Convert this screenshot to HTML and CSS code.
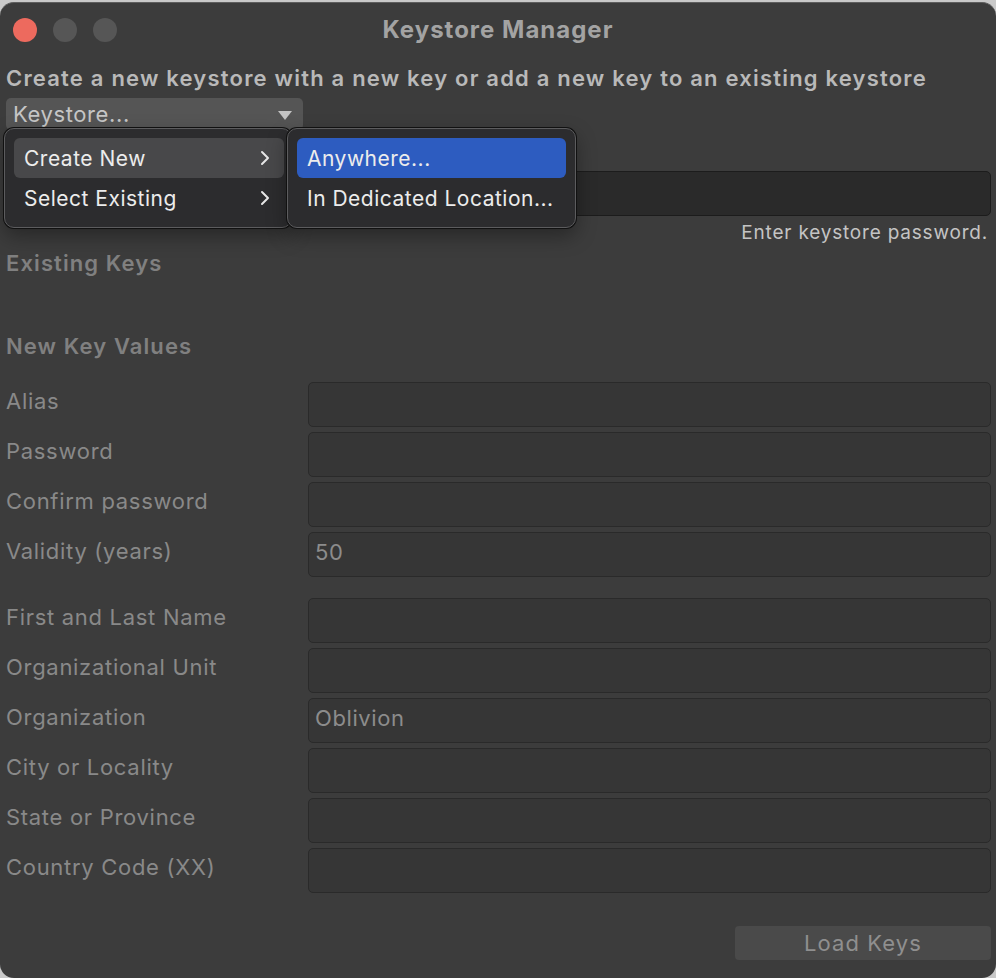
FILE: index.html
```html
<!DOCTYPE html>
<html>
<head>
<meta charset="utf-8">
<link rel="stylesheet" href="styles.css">
</head>
<body>
<div class="window">
  <div class="titlebar">
    <div class="lights">
      <span class="light red"></span>
      <span class="light"></span>
      <span class="light"></span>
    </div>
    <div class="title">Keystore Manager</div>
    <div></div>
  </div>
  <div class="content">
    <div class="subtitle">Create a new keystore with a new key or add a new key to an existing keystore</div>
    <div class="dropdown">
      <span>Keystore...</span>
      <svg class="caret" width="14" height="9" viewBox="0 0 14 9"><path d="M0 0 H14 L7 9 Z" fill="#c4c4c4"/></svg>
    </div>
    <div class="row pw-row">
      <div class="label"></div>
      <div class="field dark"></div>
    </div>
    <div class="hint">Enter keystore password.</div>
    <div class="section first">Existing Keys</div>
    <div class="section second">New Key Values</div>
    <div class="group">
      <div class="row"><div class="label">Alias</div><div class="field"></div></div>
      <div class="row"><div class="label">Password</div><div class="field"></div></div>
      <div class="row"><div class="label">Confirm password</div><div class="field"></div></div>
      <div class="row"><div class="label">Validity (years)</div><div class="field">50</div></div>
    </div>
    <div class="group second-group">
      <div class="row"><div class="label">First and Last Name</div><div class="field"></div></div>
      <div class="row"><div class="label">Organizational Unit</div><div class="field"></div></div>
      <div class="row"><div class="label">Organization</div><div class="field">Oblivion</div></div>
      <div class="row"><div class="label">City or Locality</div><div class="field"></div></div>
      <div class="row"><div class="label">State or Province</div><div class="field"></div></div>
      <div class="row"><div class="label">Country Code (XX)</div><div class="field"></div></div>
    </div>
    <div class="footer">
      <div class="button">Load Keys</div>
    </div>
  </div>

  <div class="menu main-menu">
    <div class="item active"><span>Create New</span><svg width="10" height="16" viewBox="0 0 10 16"><path d="M2 2 L8 8 L2 14" fill="none" stroke="#e6e6e6" stroke-width="2" stroke-linecap="round" stroke-linejoin="round"/></svg></div>
    <div class="item"><span>Select Existing</span><svg width="10" height="16" viewBox="0 0 10 16"><path d="M2 2 L8 8 L2 14" fill="none" stroke="#e6e6e6" stroke-width="2" stroke-linecap="round" stroke-linejoin="round"/></svg></div>
  </div>
  <div class="menu sub-menu">
    <div class="item selected"><span>Anywhere...</span></div>
    <div class="item"><span>In Dedicated Location...</span></div>
  </div>
</div>
</body>
</html>
```
FILE: styles.css
```css
* { box-sizing: border-box; }
html, body { margin: 0; padding: 0; }
body {
  background: #c9c9c9;
  font-family: Inter, "Noto Sans", "Liberation Sans", sans-serif;
  width: 996px;
  height: 978px;
  overflow: hidden;
}
.window {
  position: relative;
  margin-top: 2px;
  height: 976px;
  width: 996px;
  background: #3c3c3c;
  border-radius: 14px;
  border-top: 1px solid #5e5e5e;
  overflow: hidden;
}
.titlebar {
  height: 53px;
  display: grid;
  grid-template-columns: 1fr auto 1fr;
  align-items: center;
}
.lights {
  display: flex;
  gap: 16px;
  padding-left: 13px;
}
.light {
  width: 24px;
  height: 24px;
  border-radius: 50%;
  background: #565656;
}
.light.red { background: #ed6a5e; }
.title {
  font-weight: 700;
  font-size: 24px;
  color: #a3a3a3;
  letter-spacing: 1px;
}
.content {
  padding: 0 5px 0 6px;
}
.subtitle {
  font-weight: 600;
  font-size: 22px;
  color: #b9b9b9;
  line-height: 30px;
  margin-top: 7px;
  letter-spacing: 1.2px;
  white-space: nowrap;
}
.dropdown {
  margin-top: 5px;
  width: 297px;
  height: 32px;
  background: #555555;
  border-radius: 5px;
  display: flex;
  align-items: center;
  justify-content: space-between;
  padding: 0 11px 0 7px;
  color: #c6c6c6;
  font-size: 22px;
  letter-spacing: 0.6px;
}
.caret { margin-top: 2px; }
.row {
  display: flex;
  align-items: center;
  height: 45px;
  margin-bottom: 5px;
}
.label {
  width: 302px;
  flex: none;
  font-size: 22px;
  color: #898989;
  letter-spacing: 0.7px;
  padding-bottom: 7px;
}
.field {
  flex: 1;
  height: 45px;
  background: #363636;
  border: 1px solid #2a2a2a;
  border-radius: 5px;
  font-size: 22px;
  color: #8c8c8c;
  display: flex;
  align-items: center;
  padding-left: 6px;
  padding-bottom: 6px;
  letter-spacing: 0.6px;
}
.field.dark {
  background: #2a2a2a;
  border-color: #1c1c1c;
}
.pw-row {
  margin-top: 41px;
  margin-bottom: 0;
  height: 45px;
}
.hint {
  text-align: right;
  font-size: 19px;
  color: #c4c4c4;
  line-height: 26px;
  padding-right: 3px;
  margin-top: 4px;
  letter-spacing: 0.8px;
}
.section {
  font-weight: 600;
  font-size: 22px;
  color: #808080;
  line-height: 30px;
  letter-spacing: 1.1px;
}
.section.first { margin-top: 2px; }
.section.second { margin-top: 53px; }
.group { margin-top: 21px; }
.second-group { margin-top: 21px; }
.footer {
  display: flex;
  justify-content: flex-end;
  margin-top: 33px;
}
.button {
  width: 256px;
  height: 34px;
  background: #4a4a4a;
  border-radius: 4px;
  color: #8f8f8f;
  font-size: 22px;
  letter-spacing: 1.1px;
  display: flex;
  align-items: center;
  justify-content: center;
}
.menu {
  position: absolute;
  top: 125px;
  height: 100px;
  background: #2c2c2e;
  border: 1px solid #5c5c5e;
  box-shadow: 0 0 0 1px #111, 0 8px 20px rgba(0,0,0,0.35);
  border-radius: 10px;
  padding: 9px 7px 9px 9px;
}
.main-menu { left: 4px; width: 288px; }
.sub-menu { left: 287px; width: 289px; padding: 9px 9px; }
.item {
  height: 40px;
  border-radius: 6px;
  display: flex;
  align-items: center;
  justify-content: space-between;
  padding: 0 14px 0 10px;
  font-size: 21px;
  color: #ececec;
  letter-spacing: 0.5px;
  white-space: nowrap;
}
.sub-menu .item { padding: 0 4px 0 10px; }
.item.active { background: #48484a; }
.item.selected { background: #2d5cc0; }
```
